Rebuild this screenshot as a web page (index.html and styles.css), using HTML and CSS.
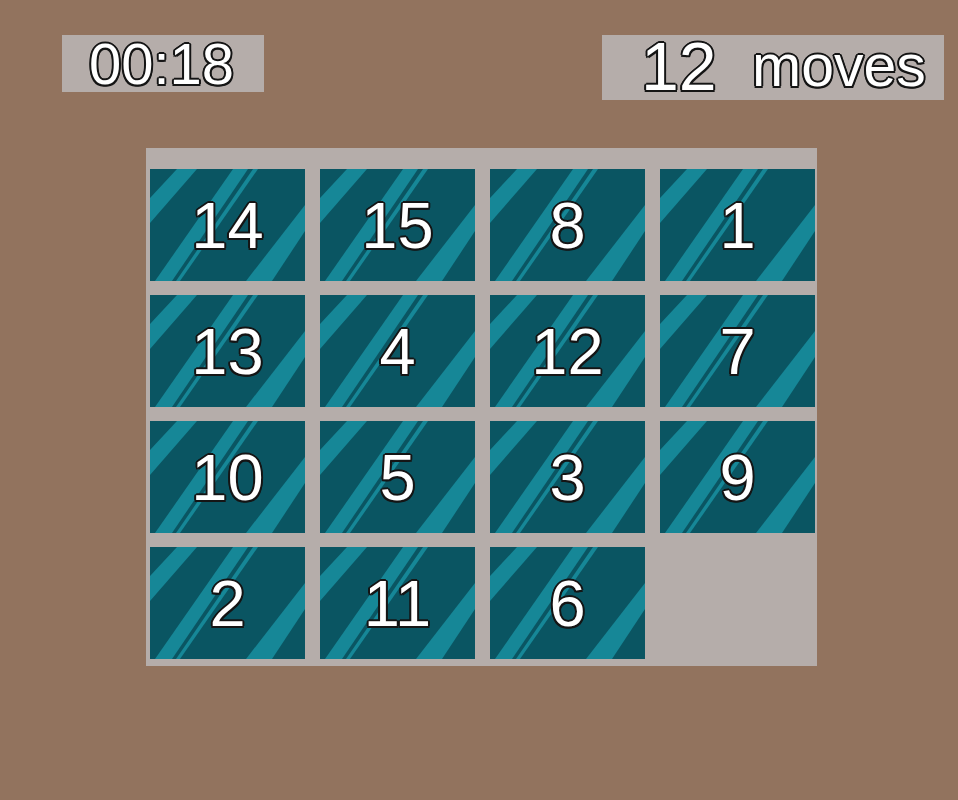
FILE: index.html
```html
<!DOCTYPE html>
<html lang="en">
<head>
    <meta charset="UTF-8">
    <meta name="viewport" content="width=device-width, initial-scale=1.0">
    <title>15 Puzzle</title>
    <link rel="stylesheet" href="styles.css">
</head>
<body>
    <div class="game">
        <div class="hud">
            <div class="timer outlined" id="timer">00:18</div>
            <div class="moves outlined">
                <span class="moves-count" id="moves">12</span>
                <span class="moves-label">moves</span>
            </div>
        </div>

        <div class="board" id="board">
            <div class="tile outlined">14</div>
            <div class="tile outlined">15</div>
            <div class="tile outlined">8</div>
            <div class="tile outlined">1</div>
            <div class="tile outlined">13</div>
            <div class="tile outlined">4</div>
            <div class="tile outlined">12</div>
            <div class="tile outlined">7</div>
            <div class="tile outlined">10</div>
            <div class="tile outlined">5</div>
            <div class="tile outlined">3</div>
            <div class="tile outlined">9</div>
            <div class="tile outlined">2</div>
            <div class="tile outlined">11</div>
            <div class="tile outlined">6</div>
            <div class="tile empty"></div>
        </div>
    </div>
</body>
</html>
```

FILE: styles.css
```css
* {
    margin: 0;
    padding: 0;
    box-sizing: border-box;
}

html, body {
    height: 100%;
}

body {
    font-family: "Liberation Sans", Arial, sans-serif;
    background-color: #92735e;
}

.game {
    padding-top: 35px;
}

.hud {
    display: flex;
    justify-content: space-between;
    align-items: flex-start;
    padding: 0 14px 0 62px;
}

/* white digits with a dark outline */
.outlined {
    color: #fff;
    text-shadow:
        -1.5px -1.5px 0 #151515,
        0 -2px 0 #151515,
        1.5px -1.5px 0 #151515,
        2px 0 0 #151515,
        1.5px 1.5px 0 #151515,
        0 2px 0 #151515,
        -1.5px 1.5px 0 #151515,
        -2px 0 0 #151515;
}

.timer {
    width: 202px;
    height: 57px;
    background-color: #b5adaa;
    font-size: 58px;
    line-height: 57px;
    text-align: center;
    padding-right: 3px;
}

.moves {
    display: flex;
    align-items: center;
    width: 342px;
    height: 65px;
    padding-left: 39px;
    background-color: #b5adaa;
}

.moves-count {
    font-size: 68px;
    line-height: 65px;
    width: 111px;
    margin-top: -3px;
}

.moves-label {
    font-size: 59px;
    line-height: 65px;
    margin-top: -3px;
}

.board {
    display: grid;
    grid-template-columns: repeat(4, 155px);
    grid-template-rows: repeat(4, 112px);
    column-gap: 15px;
    row-gap: 14px;
    width: 671px;
    height: 518px;
    margin: 48px 0 0 146px;
    padding: 21px 3px 7px 4px;
    background-color: #b5adaa;
}

.tile {
    display: flex;
    align-items: center;
    justify-content: center;
    font-size: 65px;
    background-color: #0a5562;
    background-image: url("data:image/svg+xml;utf8,<svg xmlns='http://www.w3.org/2000/svg' viewBox='0 0 155 112' preserveAspectRatio='none'><g fill='%23168797'><polygon points='27,0 47,0 0,54 0,29'/><polygon points='83,0 98,0 22,112 5,112'/><polygon points='103,0 108,0 30,112 26,112'/><polygon points='155,36 155,62 122,112 96,112'/></g></svg>");
    background-size: 100% 100%;
}

.tile.empty {
    background: none;
}
```
